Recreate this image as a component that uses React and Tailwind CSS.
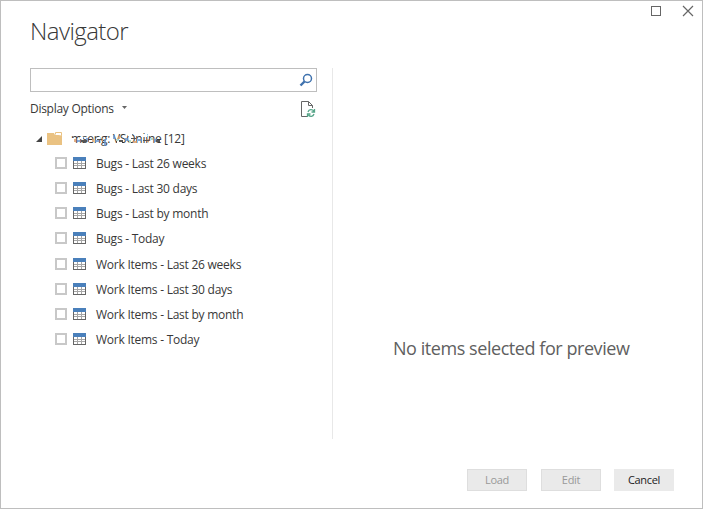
import React from "react";

const bugItems = ["Bugs - Last 26 weeks", "Bugs - Last 30 days", "Bugs - Last by month", "Bugs - Today"];
const workItems = ["Work Items - Last 26 weeks", "Work Items - Last 30 days", "Work Items - Last by month", "Work Items - Today"];

function TableIcon() {
  return (
    <svg width="13" height="12" className="ml-1.5 block shrink-0" shapeRendering="crispEdges">
      <path d="M0 0h13v12H0z" fill="#666" />
      <path d="M1 4h11v7H1z" fill="#fff" />
      <path d="M0 0h13v4H0z" fill="#4a80bb" />
      <path d="M4 4h1v7H4zM8 4h1v7H8zM1 6h11v1H1zM1 8h11v1H1z" fill="#a6a6a6" />
    </svg>
  );
}

function Row({ text }) {
  return (
    <div className="flex h-[25px] items-center">
      <div className="h-3 w-3 border-2 border-[#c8c8c8]" />
      <TableIcon />
      <span className="ml-[10px] whitespace-nowrap pt-[2px]">{text}</span>
    </div>
  );
}

// Partly erased account name with coloured fringes
function ObscuredName() {
  return (
    <span className="relative ml-[9px] w-[93px] shrink-0 whitespace-nowrap">
      mseng: VSOnline
      <svg width="93" height="16" className="absolute left-0 top-0" shapeRendering="crispEdges">
        <path d="M0 7h4v6H0zM9 6h3v2H9zM18 9h3v2h-3zM27 6h2v2h-2zM46 10h5v3h-5zM57 3h4v2h-4zM70 3h6v3h-6zM78 10h3v3h-3z" fill="#fff" />
        <path d="M6 9h3v2H6zM15 7h2v4h-2zM24 9h4v2h-4zM33 8h2v7h-2zM42 4h2v4h-2zM54 7h3v3h-3zM67 8h4v2h-4zM83 8h3v3h-3z" fill="#6795cf" fillOpacity=".8" />
        <path d="M3 8h2v3H3zM12 10h4v1h-4zM21 8h2v3h-2zM30 7h2v3h-2zM47 5h2v3h-2zM62 10h4v2h-4zM76 8h2v3h-2z" fill="#d99b66" fillOpacity=".8" />
        <path d="M10 9h6v2h-6zM26 8h5v1h-5zM48 9h4v2h-4zM60 7h5v1h-5zM72 9h6v1h-6zM85 9h4v2h-4z" fill="#555" />
        <path d="M45 8h2v2h-2zM58 9h2v3h-2zM80 7h2v2h-2z" fill="#b7d9c0" />
      </svg>
    </span>
  );
}

export default function App() {
  return (
    <div className="flex h-[509px] w-[703px] flex-col border border-[#bebebe] bg-white font-['Open_Sans','Noto_Sans',sans-serif] text-[12px] leading-4 tracking-[-0.25px] text-[#383838]">
      <header className="flex h-[67px] justify-between pl-[29px]">
        <h1 className="pt-[10px] text-[24px] font-light leading-10 tracking-[-0.55px]">Navigator</h1>
        <svg width="52" height="20" className="block" fill="none" stroke="#666">
          <path d="M1.5 5.5h9v9h-9z" shapeRendering="crispEdges" />
          <path d="m33 5 10 10M43 5 33 15" strokeWidth="1.2" />
        </svg>
      </header>
      <main className="flex h-[371px]">
        <section className="w-[331px] pl-[29px]">
          <div className="flex h-6 w-[287px] items-center justify-end border border-[#bebebe] pr-[3px]">
            <svg width="14" height="14" fill="none" stroke="#3f72ae">
              <circle cx="8.5" cy="5.5" r="4" strokeWidth="1.5" />
              <path d="m5.5 8.5-4 4" strokeWidth="2.4" />
            </svg>
          </div>
          <div className="flex h-[33px] w-[287px] items-center">
            <span className="pt-px tracking-[-0.28px]">Display Options</span>
            <svg width="5" height="3" className="mb-[3px] ml-2"><path d="M0 0h5L2.5 3z" fill="#666" /></svg>
            <svg width="16" height="18" className="ml-auto mr-px" fill="none">
              <path d="M7 16.5H1.5v-15h7l4 4V8M8.5 1.5v4h4" stroke="#666" />
              <path d="M8 12c1-3 4-3 6-1M14.5 9v3h-3M14 14c-1 3-4 3-5.5 1M7.5 17v-3h3" stroke="#55a488" strokeWidth="1.3" />
            </svg>
          </div>
          <div className="flex h-[25px] items-center pl-[6px] pt-[2px]">
            <svg width="6" height="6"><path d="M6 0v6H0z" fill="#444" /></svg>
            <svg width="15" height="13" className="mb-px ml-[5px] shrink-0">
              <path d="M0 1h7l1 2h7v10H0z" fill="#eac282" />
              <path d="M8.5 2.5v-2h6v3" fill="#fff" stroke="#eac282" />
            </svg>
            <ObscuredName />
            <span>[12]</span>
          </div>
          <div className="pl-[25px]">
            {bugItems.map((text) => <Row key={text} text={text} />)}
            <div className="h-px" />
            {workItems.map((text) => <Row key={text} text={text} />)}
          </div>
        </section>
        <section className="flex-1 border-l border-[#e8e8e8] pl-[60px] pt-[267px] text-[18px] leading-[26px] tracking-[-0.44px] text-[#606060]">
          No items selected for preview
        </section>
      </main>
      <footer className="flex pl-[466px] pt-[30px] text-[11px] tracking-[-0.3px]">
        <button className="flex h-[22px] w-[60px] items-center justify-center border border-[#dedede] bg-[#eaeaea] text-[#999]">Load</button>
        <button className="ml-[14px] flex h-[22px] w-[60px] items-center justify-center border border-[#dedede] bg-[#eaeaea] text-[#999]">Edit</button>
        <button className="ml-[13px] flex h-[22px] w-[60px] items-center justify-center bg-[#eaeaea] text-[#222]">Cancel</button>
      </footer>
    </div>
  );
}
